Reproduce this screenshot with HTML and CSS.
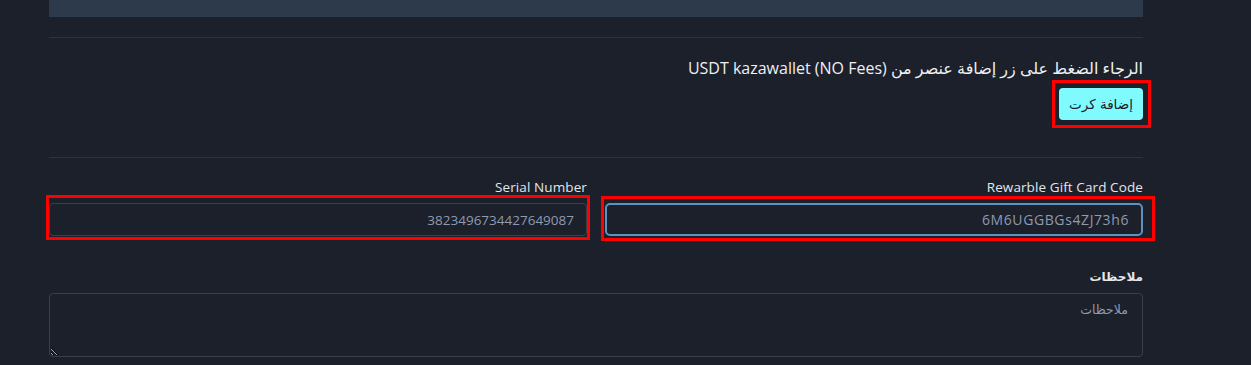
FILE: index.html
```html
<!DOCTYPE html>
<html lang="ar" dir="rtl">
<head>
<meta charset="utf-8">
<title>Form</title>
<link rel="stylesheet" href="styles.css">
</head>
<body>
<div class="page">
  <div class="topbar"></div>
  <hr class="sep sep-first">
  <div class="notice">
    <p class="notice-text">الرجاء الضغط على زر إضافة عنصر من USDT kazawallet (NO Fees)</p>
    <div class="btn-wrap">
      <button class="btn-add" type="button">إضافة كرت</button>
      <span class="mark mark-btn"></span>
    </div>
  </div>
  <hr class="sep sep-second">
  <div class="fields">
    <div class="field">
      <label class="label">Rewarble Gift Card Code</label>
      <div class="input-wrap">
        <input class="input input-focus" type="text" value="6M6UGGBGs4ZJ73h6">
        <span class="mark mark-code"></span>
      </div>
    </div>
    <div class="field">
      <label class="label">Serial Number</label>
      <div class="input-wrap">
        <input class="input" type="text" value="3823496734427649087">
        <span class="mark mark-serial"></span>
      </div>
    </div>
  </div>
  <div class="notes">
    <label class="label label-bold">ملاحظات</label>
    <textarea class="textarea" placeholder="ملاحظات"></textarea>
  </div>
</div>
</body>
</html>
```

FILE: styles.css
```css
* { box-sizing: border-box; }
html, body {
  margin: 0;
  padding: 0;
  background: #1b202b;
  height: 100%;
  overflow: hidden;
}
body {
  font-family: "Open Sans", "DejaVu Sans", sans-serif;
  color: #e3e6eb;
}
.page {
  width: 1094px;
  margin-right: 108px;
  margin-left: 49px;
}
.topbar {
  height: 17px;
  background: #2d3a4b;
}
.sep {
  border: 0;
  height: 1px;
  background: #2d333e;
  margin: 0;
}
.sep-first { margin-top: 20px; }
.notice {
  padding-top: 19px;
  display: flex;
  flex-direction: column;
  align-items: flex-start;
}
.notice-text {
  margin: 0;
  font-size: 16px;
  line-height: 22px;
  color: #eef0f3;
}
.btn-wrap {
  position: relative;
  margin-top: 9px;
}
.btn-add {
  width: 84px;
  height: 32px;
  border: 0;
  border-radius: 4px;
  background: #80fbfd;
  color: #1b202b;
  font-family: "DejaVu Sans", sans-serif;
  font-size: 13.5px;
  padding: 0;
  display: block;
}
.sep-second { margin-top: 37px; }
.fields {
  display: flex;
  gap: 18px;
  margin-top: 21px;
}
.field {
  flex: 1;
  display: flex;
  flex-direction: column;
  align-items: stretch;
}
.label {
  display: block;
  font-size: 13.5px;
  line-height: 16px;
  color: #e3e6eb;
  margin-bottom: 8px;
  letter-spacing: 0.1px;
}
.label-bold {
  font-family: "DejaVu Sans", sans-serif;
  font-weight: bold;
  font-size: 12px;
  letter-spacing: 0;
}
.input-wrap { position: relative; }
.input {
  width: 100%;
  height: 33px;
  background: #1b202b;
  border: 1px solid #3a404b;
  border-radius: 4px;
  color: #8e9aae;
  font-family: "Open Sans", sans-serif;
  font-size: 13.5px;
  padding: 0 12px;
  direction: rtl;
  outline: none;
}
.input-focus {
  border: 2px solid #5f91c0;
  border-radius: 5px;
  padding: 0 12px 0 12px;
  font-size: 14px;
  letter-spacing: 0.6px;
}
.mark {
  position: absolute;
  border: 3px solid #ff0000;
  pointer-events: none;
}
.mark-btn { top: -8px; bottom: -8px; right: -8px; left: -7px; }
.mark-code { top: -7px; bottom: -5px; right: -12px; left: -4px; }
.mark-serial { top: -8px; bottom: -4px; right: -3px; left: -3px; }
.notes {
  margin-top: 33px;
}
.notes .label { margin-bottom: 8px; }
.textarea {
  width: 100%;
  height: 64px;
  background: #1b202b;
  border: 1px solid #3a404b;
  border-radius: 4px;
  color: #8e9aae;
  font-family: "DejaVu Sans", sans-serif;
  font-size: 12.5px;
  padding: 8px 14px;
  resize: vertical;
  display: block;
}
.textarea::placeholder { color: #8e9aae; }
```
